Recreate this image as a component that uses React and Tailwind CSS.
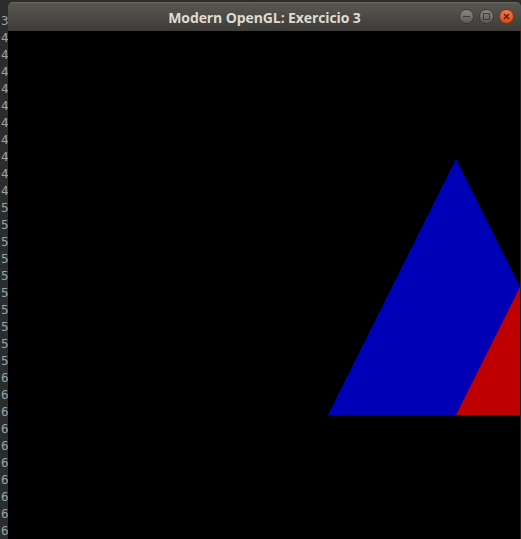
import React from "react";

const digits = ["3", ...Array(10).fill("4"), ...Array(10).fill("5"), ...Array(10).fill("6")];

export default function App() {
  return (
    <div className="w-[521px] h-[539px] overflow-hidden bg-[#2c2c2c] flex">
      <div className="w-[8px] shrink-0 overflow-hidden pt-[11.5px] font-['DejaVu_Sans_Mono',monospace] text-[12.5px] leading-[17px] text-[#98a2a8]">
        {digits.map((d, i) => (
          <div key={i} className="pl-[1px]">{d}</div>
        ))}
      </div>
      <div className="flex-1 flex flex-col mt-[2px]">
        <div className="h-[29px] shrink-0 rounded-t-[5px] bg-gradient-to-b from-[#5a5751] to-[#3d3c38] border-t border-[#6a675f] flex items-center relative">
          <div className="flex-1 text-center font-['Open_Sans',sans-serif] font-bold text-[14px] text-[#dfdbd2] tracking-[-0.1px]">
            Modern OpenGL: Exercicio 3
          </div>
          <div className="absolute right-[7px] top-[6px] flex gap-[5px]">
            <div className="w-[15px] h-[15px] rounded-full bg-gradient-to-b from-[#8a8983] to-[#5a5954] border border-[#3a3935] flex items-center justify-center">
              <div className="w-[7px] h-[1.5px] bg-[#3c3b37]" />
            </div>
            <div className="w-[15px] h-[15px] rounded-full bg-gradient-to-b from-[#8a8983] to-[#5a5954] border border-[#3a3935] flex items-center justify-center">
              <div className="w-[7px] h-[7px] border border-[#3c3b37]" />
            </div>
            <div className="w-[15px] h-[15px] rounded-full bg-gradient-to-b from-[#f47a48] to-[#de4813] border border-[#8a3010] flex items-center justify-center">
              <svg width="7" height="7" viewBox="0 0 7 7">
                <path d="M1 1L6 6M6 1L1 6" stroke="#5a1c06" strokeWidth="1.4" />
              </svg>
            </div>
          </div>
        </div>
        <div className="flex-1 flex bg-black">
          <div className="w-[512px] h-[512px] shrink-0 bg-black">
            <svg width="512" height="512" viewBox="0 0 512 512">
              <polygon points="448,128 320,384 576,384" fill="#0000b6" />
              <polygon points="576,128 448,384 704,384" fill="#bf0000" />
            </svg>
          </div>
          <div className="w-[1px] bg-[#222]" />
        </div>
      </div>
    </div>
  );
}
